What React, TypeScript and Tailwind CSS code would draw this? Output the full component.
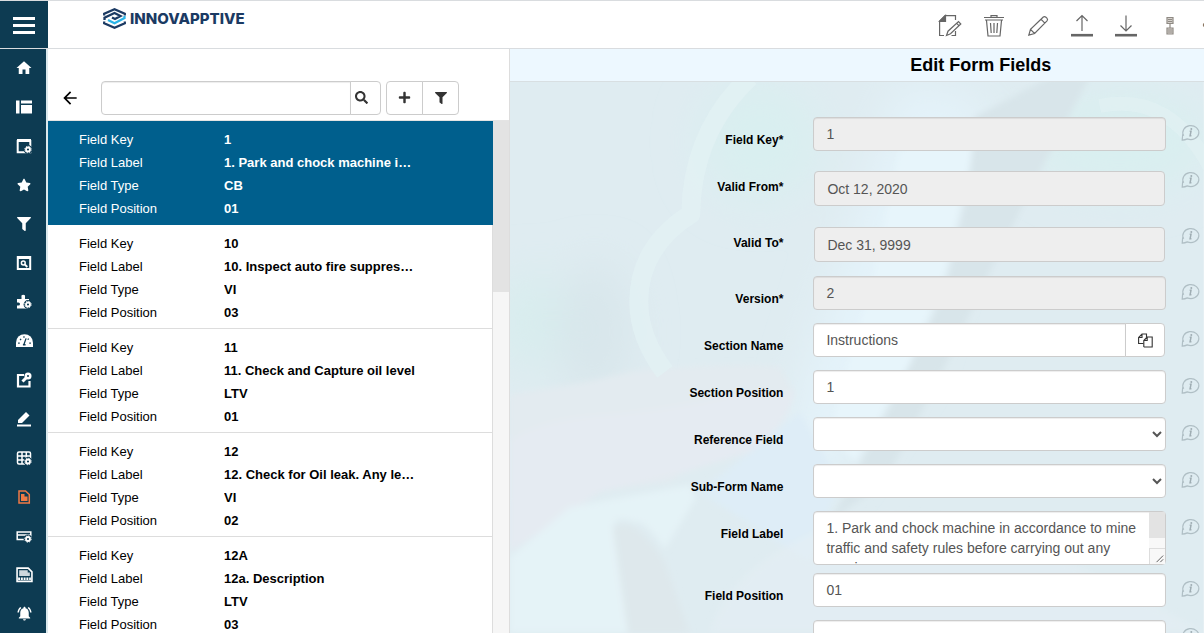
import type { ReactNode } from "react";
import { FaFilter, FaPlus, FaSearch, FaStar } from "react-icons/fa";
import { MdHome, MdNotificationsActive, MdOutlineArrowBack } from "react-icons/md";

interface IRecord {
  key: string;
  label: string;
  type: string;
  position: string;
}

const records: IRecord[] = [
  { key: "1", label: "1. Park and chock machine i…", type: "CB", position: "01" },
  { key: "10", label: "10. Inspect auto fire suppres…", type: "VI", position: "03" },
  { key: "11", label: "11. Check and Capture oil level", type: "LTV", position: "01" },
  { key: "12", label: "12. Check for Oil leak. Any le…", type: "VI", position: "02" },
  { key: "12A", label: "12a. Description", type: "LTV", position: "03" },
];

const Glyph = ({ children, size = 16 }: { children: ReactNode; size?: number }) => (
  <svg width={size} height={size} viewBox="0 0 16 16" fill="none" stroke="currentColor" strokeWidth="1.5">
    {children}
  </svg>
);

const Gear = ({ x, y }: { x: number; y: number }) => (
  <g>
    <circle cx={x} cy={y} r="4.4" fill="#0d3b52" stroke="none" />
    <circle cx={x} cy={y} r="2" strokeWidth="1.8" />
    <circle cx={x} cy={y} r="3.2" strokeWidth="1" strokeDasharray="1.3 1.21" />
  </g>
);

const menu = [
  { name: "Home", icon: <MdHome size={18} /> },
  {
    name: "Layout",
    icon: (
      <Glyph>
        <path d="M0 1.500h3.500v13H0zM5 1.500h11v3H5zM5 6h11v8.500H5z" fill="currentColor" stroke="none" />
      </Glyph>
    ),
  },
  {
    name: "Window settings",
    icon: (
      <Glyph>
        <path d="M1.700 2v12.300h12.600V2" strokeWidth="2" />
        <path d="M1 2.500h14" strokeWidth="3" />
        <Gear x={12} y={11.5} />
      </Glyph>
    ),
  },
  { name: "Favourites", icon: <FaStar size={14} /> },
  { name: "Filters", icon: <FaFilter size={14} /> },
  {
    name: "Preview",
    icon: (
      <Glyph>
        <path d="M1.800 2v12h12.400V2z" strokeWidth="2" />
        <path d="M1 2.500h14" strokeWidth="3" />
        <circle cx="7.300" cy="8" r="1.900" />
        <path d="M8.800 9.500l2.500 2.500" strokeWidth="1.800" />
      </Glyph>
    ),
  },
  {
    name: "Extensions",
    icon: (
      <Glyph>
        <path
          d="M1 5h4.500V3a1.800 1.800 0 1 1 3.500 0v2H13v9.500H1V11.500h1.500a1.500 1.500 0 0 0 0-3H1z"
          fill="currentColor"
          stroke="none"
        />
        <Gear x={12} y={10.5} />
      </Glyph>
    ),
  },
  {
    name: "Dashboard",
    icon: (
      <Glyph size={17}>
        <path d="M0 14V10a8 8 0 0 1 16 0v4z" fill="currentColor" stroke="none" />
        <g stroke="#0d3b52" strokeWidth="1.200">
          <path d="M7.500 11.500L9.500 6M2 10.500h1.500M12.500 10.500H14M3.800 6.500l1 1M7.500 4v1.300M12 6.200l-1 1M6.500 12h2.500" />
        </g>
      </Glyph>
    ),
  },
  {
    name: "Assign",
    icon: (
      <Glyph>
        <path d="M8 3H2v11.500h11.500V9" strokeWidth="2.200" />
        <circle cx="12" cy="4" r="3.500" fill="currentColor" stroke="none" />
        <path d="M11 5L6.500 9.500" strokeWidth="3" />
        <circle cx="12" cy="4" r="1" fill="#0d3b52" stroke="none" />
      </Glyph>
    ),
  },
  {
    name: "Edit",
    icon: (
      <Glyph>
        <path d="M2 12V9l8-8 3.500 3.500-7.500 7.500z" fill="currentColor" stroke="none" />
        <path d="M1 14.500h14" strokeWidth="2" />
      </Glyph>
    ),
  },
  {
    name: "Table settings",
    icon: (
      <Glyph>
        <rect x="1.500" y="2" width="13" height="12" rx="1.500" />
        <path d="M1.500 6h13M1.500 10h13M6 2v12M10.300 2v12" />
        <Gear x={12} y={11.5} />
      </Glyph>
    ),
  },
  {
    name: "Forms",
    icon: (
      <span className="text-[#ef7a45]">
        <Glyph>
          <path d="M3 2h6.500L13.300 5.500V14H3z" />
          <path d="M5 5h3.500V7.500H11.500V12H5z" fill="currentColor" stroke="none" />
        </Glyph>
      </span>
    ),
  },
  {
    name: "Field settings",
    icon: (
      <Glyph>
        <path d="M1.200 4h13.600v7.500H1.200zM1 7h14" />
        <Gear x={12} y={11} />
      </Glyph>
    ),
  },
  {
    name: "Reports",
    icon: (
      <Glyph size={17}>
        <path d="M1 2h10.500L15 5.500V14.500H1z" />
        <path d="M3 4h8v2h2v3.500H3z" fill="currentColor" fillOpacity="0.8" stroke="none" />
        <path d="M2 12h12" strokeWidth="2.500" strokeDasharray="1.800 0.800" />
      </Glyph>
    ),
  },
  { name: "Notifications", icon: <MdNotificationsActive size={17} /> },
];

function Logo() {
  return (
    <div className="flex items-center gap-1">
      <svg width="23" height="21" viewBox="0 0 23 21" fill="none" strokeWidth="2.300">
        <path d="M1.200 7.500V5.800L11.500 1.300l10.300 4.500v1.700" stroke="#1b3a63" />
        <path d="M1.200 13.500v1.700l10.300 4.500 10.300-4.500v-1.700" stroke="#1b3a63" />
        <path d="M1.500 12v-2.300L11.500 5l6 3-5.500 3-3-1.500" stroke="#1b3a63" />
        <path d="M5 12l6.500 3.200 10-5.200V8" stroke="#2ab4e8" />
      </svg>
      <span className="font-[Inter,sans-serif] text-[15px] leading-5 font-extrabold text-[#1b3a63]">INNOVAPPTIVE</span>
    </div>
  );
}

const Tool = ({ name, children }: { name: string; children: ReactNode }) => (
  <button type="button" aria-label={name} className="flex h-12 w-11 shrink-0 items-center justify-center text-[#666]">
    <svg width="24" height="24" viewBox="0 0 24 24" fill="none" stroke="currentColor" strokeWidth="1.200">
      {children}
    </svg>
  </button>
);

function Toolbar() {
  return (
    <div className="-mr-8 ml-auto flex items-center pt-0.5">
      <Tool name="Edit form">
        <path d="M6 21.500H1.600V7L7 1.600h10.500V6M13.500 21.500h4V17" />
        <path d="M1.500 7.500L7.500 1.500v6z" fill="currentColor" />
        <path d="M8.500 21.500l1.500-4.300L20.500 7.500l2.300 2.500-10.300 9.700zM18.500 9.200l2.400 2.500" />
      </Tool>
      <Tool name="Delete">
        <path d="M2 3.500h20M9 3V1.600h6V3M3 6h18M4.500 6.500L6 22h12l1.500-15.500" />
        <path d="M8.500 9l.7 10M12 9v10M15.500 9l-.7 10" />
      </Tool>
      <Tool name="Edit">
        <path d="M2.800 21.200l1.700-5.900L17.300 3q1.300-1 2.600.2l1 1q1.300 1.300.1 2.600L8.600 19.500zM15 5.200l3.800 3.900M4.500 15.300l4.100 4.200" />
      </Tool>
      <Tool name="Upload">
        <path d="M12 17V1.500M6.500 7L12 1.500 17.500 7" />
        <path d="M1 21.200h22" strokeWidth="2.600" />
      </Tool>
      <Tool name="Download">
        <path d="M12 1.500V17M6.500 11.500L12 17l5.500-5.500" />
        <path d="M1 21.200h22" strokeWidth="2.600" />
      </Tool>
      <Tool name="Hierarchy">
        <g stroke="#8f8a84">
          <path d="M9 3.500h6v6H9zM9 14h6v6H9z" fill="#d5d1cc" />
          <path d="M12 9.500V14M10 5.500h4M10 7.500h4M10 16h4M10 18h4" />
        </g>
      </Tool>
      <Tool name="More">
        <circle cx="3" cy="11" r="2.200" fill="#8a7560" stroke="none" />
      </Tool>
    </div>
  );
}

function RecordItem({ record, selected }: { record: IRecord; selected: boolean }) {
  const rows = [
    ["Field Key", record.key],
    ["Field Label", record.label],
    ["Field Type", record.type],
    ["Field Position", record.position],
  ];
  return (
    <li
      className={
        selected
          ? "border-b border-[#005f8d] bg-[#005f8d] pt-[7px] pb-1 pl-[31px] text-white"
          : "border-r border-b border-[#ddd] bg-white pt-[7px] pb-1 pl-[31px] text-black"
      }
    >
      <dl className="grid grid-cols-[145px_minmax(0,1fr)] text-[13px] leading-[23px]">
        {rows.map(([name, value]) => (
          <div key={name} className="contents">
            <dt>{name}</dt>
            <dd className="truncate font-bold">{value}</dd>
          </div>
        ))}
      </dl>
    </li>
  );
}

function RecordList() {
  return (
    <section className="flex min-h-0 flex-col border-r border-[#ddd] bg-white">
      <div className="flex h-[72px] shrink-0 items-center border-b border-[#e4e4e4] pt-[26px] pl-3 text-[#333]">
        <button type="button" aria-label="Back" className="mr-[21px] text-black">
          <MdOutlineArrowBack size={20} />
        </button>
        <form className="flex" role="search">
          <input
            aria-label="Search fields"
            className="h-[34px] w-[250px] rounded-l border border-[#ccc] px-3 text-sm shadow-[inset_0_1px_1px_rgba(0,0,0,0.075)]"
          />
          <button type="button" aria-label="Search" className="-ml-px flex w-[31px] items-center justify-center rounded-r border border-[#ccc] pr-2">
            <FaSearch size={13} />
          </button>
        </form>
        <div className="ml-[5px] flex h-[34px]">
          <button type="button" aria-label="Add" className="flex w-[37px] items-center justify-center rounded-l border border-[#ccc]">
            <FaPlus size={13} />
          </button>
          <button type="button" aria-label="Filter" className="-ml-px flex w-[37px] items-center justify-center rounded-r border border-[#ccc]">
            <FaFilter size={12} />
          </button>
        </div>
      </div>
      <div className="flex min-h-0 flex-1 overflow-hidden">
        <ul className="min-w-0 flex-1">
          {records.map((record, index) => (
            <RecordItem key={record.key} record={record} selected={index === 0} />
          ))}
        </ul>
        <div className="w-4 bg-[#f6f6f6]">
          <div className="h-1/3 bg-[#e3e3e3]" />
        </div>
      </div>
    </section>
  );
}

// pale photo behind the form: a hand, a pen and a few glass curves
function Backdrop() {
  return (
    <svg
      aria-hidden="true"
      className="absolute inset-0 h-full w-full"
      viewBox="0 0 694 551"
      preserveAspectRatio="xMidYMid slice"
    >
      <defs>
        <filter id="soft" x="-20%" y="-20%" width="140%" height="140%">
          <feGaussianBlur stdDeviation="3" />
        </filter>
        <filter id="haze" x="-50%" y="-50%" width="200%" height="200%">
          <feGaussianBlur stdDeviation="22" />
        </filter>
      </defs>
      <rect width="694" height="551" fill="#dfecf1" />
      <g filter="url(#haze)">
        <ellipse cx="20" cy="240" rx="35" ry="50" fill="#d8edee" />
        <ellipse cx="250" cy="60" rx="60" ry="60" fill="#d9eff0" />
        <ellipse cx="610" cy="60" rx="90" ry="50" fill="#d9eff0" />
        <ellipse cx="85" cy="250" rx="35" ry="70" fill="#d8e6eb" />
        <path d="M390 0L480 20 400 280 320 400 270 400 300 280z" fill="#e4f3fa" />
      </g>
      <g filter="url(#soft)">
        <path d="M390 70L470 35 455 100 435 190 400 280 345 380 320 350 365 190z" fill="#e7f5fb" />
        <path d="M465 35L540 -5 580 -5 530 90 480 190 435 285 375 400 322 438 385 315 435 210 460 100z" fill="#d8e5ea" />
        <path d="M0 312Q60 305 120 290 210 280 270 285L285 312 160 400 0 420z" fill="#e3ebf0" />
        <path d="M0 358Q30 340 75 335 150 330 220 314L285 310Q275 350 240 370L175 390 90 410 0 470z" fill="#e5ebf2" />
        <path d="M290 330L330 400 300 480 190 410 240 370z" fill="#deedf7" />
        <path d="M60 425L180 403 186 416 155 467Q135 437 125 440 108 432 103 443L112 490 125 551H0V475z" fill="#e5f3f7" />
        <path d="M103 446Q125 432 155 480L180 551H118z" fill="#dee8ec" />
        <path d="M200 551Q220 480 330 440T694 551z" fill="#e5eff3" fillOpacity="0.6" />
      </g>
      <g fill="none" stroke="#e2f1f4" strokeOpacity="0.8" strokeWidth="19">
        <path d="M240 -5Q182 50 181 132 129 165 129 220 129 255 155 290" strokeLinejoin="round" />
        <path d="M590 24Q660 10 700 85" strokeWidth="14" strokeOpacity="0.6" />
      </g>
    </svg>
  );
}

const InfoIcon = () => (
  <svg width="19" height="18" viewBox="0 0 19 18" fill="none" stroke="#b0bfc5" strokeWidth="1.200" aria-hidden="true">
    <path d="M2.700 11.800A8 7 0 1 1 6.300 14.900Q4 16 1.200 16.200L1.700 10.200" />
    <path d="M8.700 7.300h1.300l-.9 4.400h1.300" stroke="#9fadb3" strokeWidth="1.500" />
    <circle cx="10.300" cy="4.900" r="1" fill="#9fadb3" stroke="none" />
  </svg>
);

const control =
  "block h-[34px] w-full rounded border border-[#ccc] bg-white px-3 text-sm text-[#555] shadow-[inset_0_1px_1px_rgba(0,0,0,0.075)] read-only:bg-[#eee]";
const selectControl =
  "block h-[34px] w-full rounded border border-[#ccc] bg-white px-3 text-sm text-[#555] shadow-[inset_0_1px_1px_rgba(0,0,0,0.075)]";
const dateControl = "block h-[35px] w-full rounded border border-[#ccc] bg-[#eee] px-3 text-sm text-[#555]";

function FormRow({ id, label, children }: { id: string; label: string; children: ReactNode }) {
  return (
    <div className="grid grid-cols-[273px_minmax(0,1fr)_23px] items-start">
      <label htmlFor={id} className="pt-[15px] text-right text-xs leading-4 font-bold text-black">
        {label}
      </label>
      <div className="pr-[15px] pl-[30px]">{children}</div>
      <div className="pt-[7px]">
        <InfoIcon />
      </div>
    </div>
  );
}

function EditForm() {
  return (
    <section className="flex min-h-0 flex-col">
      <h1 className="shrink-0 border-b border-[#d8dfe2] bg-[#edf8ff] pl-[247px] text-center text-lg leading-8 font-bold text-black">
        Edit Form Fields
      </h1>
      <div className="relative min-h-0 flex-1 overflow-hidden">
        <Backdrop />
        <form className="relative flex flex-col gap-[13px] pt-[35px]">
          <FormRow id="key" label="Field Key*">
            <input id="key" readOnly className={control} defaultValue="1" />
          </FormRow>
          <FormRow id="from" label="Valid From*">
            <div className="px-px pt-[7px] pb-px">
              <input id="from" readOnly className={dateControl} defaultValue="Oct 12, 2020" />
            </div>
          </FormRow>
          <FormRow id="to" label="Valid To*">
            <div className="px-px pt-[7px] pb-px">
              <input id="to" readOnly className={dateControl} defaultValue="Dec 31, 9999" />
            </div>
          </FormRow>
          <FormRow id="version" label="Version*">
            <input id="version" readOnly className={control} defaultValue="2" />
          </FormRow>
          <FormRow id="section" label="Section Name">
            <div className="flex pr-px">
              <input
                id="section"
                className="h-[34px] min-w-0 flex-1 rounded-l border border-[#ccc] bg-white px-3 text-sm text-[#555] shadow-[inset_0_1px_1px_rgba(0,0,0,0.075)]"
                defaultValue="Instructions"
              />
              <button
                type="button"
                aria-label="Choose section"
                className="-ml-px flex w-10 items-center justify-center rounded-r border border-[#ccc] bg-white text-[#333]"
              >
                <svg width="15" height="15" viewBox="0 0 15 15" fill="none" stroke="currentColor" strokeWidth="1.100">
                  <path d="M5.500 10.500H.6V4.500L4 1h4.500v3.500M.6 4.500H4V1" />
                  <path d="M5.800 14V7.500L9.200 4M5.800 7.500h3.400V4h5v10H5.800" />
                </svg>
              </button>
            </div>
          </FormRow>
          <FormRow id="sectionPosition" label="Section Position">
            <input id="sectionPosition" className={control} defaultValue="1" />
          </FormRow>
          <FormRow id="reference" label="Reference Field">
            <select id="reference" className={selectControl} />
          </FormRow>
          <FormRow id="subForm" label="Sub-Form Name">
            <select id="subForm" className={selectControl} />
          </FormRow>
          <FormRow id="fieldLabel" label="Field Label">
            <div className="relative -mb-[5px]">
              <textarea
                id="fieldLabel"
                className="block h-[54px] w-full resize-none overflow-hidden rounded border border-[#ccc] bg-white py-1.5 pr-7 pl-3 text-sm leading-5 text-[#555] shadow-[inset_0_1px_1px_rgba(0,0,0,0.075)]"
                defaultValue="1. Park and chock machine in accordance to mine traffic and safety rules before carrying out any repairs"
              />
              <div className="absolute inset-y-px right-px flex w-4 flex-col bg-[#f8f8f8]">
                <div className="h-[26px] bg-[#e3e3e3]" />
                <svg className="mt-auto border-t border-l border-[#ddd]" width="16" height="16" viewBox="0 0 16 16" stroke="#555">
                  <path d="M7 14l7-7M11 14l3-3" />
                </svg>
              </div>
            </div>
          </FormRow>
          <FormRow id="fieldPosition" label="Field Position">
            <input id="fieldPosition" className={control} defaultValue="01" />
          </FormRow>
          <FormRow id="defaultValue" label="">
            <input id="defaultValue" aria-label="Default value" className={control} />
          </FormRow>
        </form>
      </div>
    </section>
  );
}

export default function App() {
  return (
    <div className="flex h-screen flex-col overflow-hidden bg-white font-['Liberation_Sans',Arial,sans-serif]">
      <header className="flex h-[49px] shrink-0 overflow-hidden border-t border-b border-[#d9dcdf]">
        <button type="button" aria-label="Menu" className="-mb-px flex w-12 shrink-0 flex-col items-center justify-center gap-1 bg-[#0d3b52]">
          <span className="h-[3px] w-[22px] bg-white" />
          <span className="h-[3px] w-[22px] bg-white" />
          <span className="h-[3px] w-[22px] bg-white" />
        </button>
        <div className="pt-[7px] pl-[55px]">
          <Logo />
        </div>
        <Toolbar />
      </header>
      <div className="flex min-h-0 flex-1">
        <nav aria-label="Main" className="w-12 shrink-0 overflow-hidden border-r-2 border-[#dbe8ec] bg-[#0d3b52]">
          <ul className="pl-0.5">
            {menu.map((item) => (
              <li key={item.name}>
                <a href="#" aria-label={item.name} className="flex h-[39px] items-center justify-center pb-0.5 text-white">
                  {item.icon}
                </a>
              </li>
            ))}
          </ul>
        </nav>
        <main className="grid min-w-0 flex-1 grid-cols-[2fr_3fr] grid-rows-[minmax(0,1fr)]">
          <RecordList />
          <EditForm />
        </main>
      </div>
    </div>
  );
}
